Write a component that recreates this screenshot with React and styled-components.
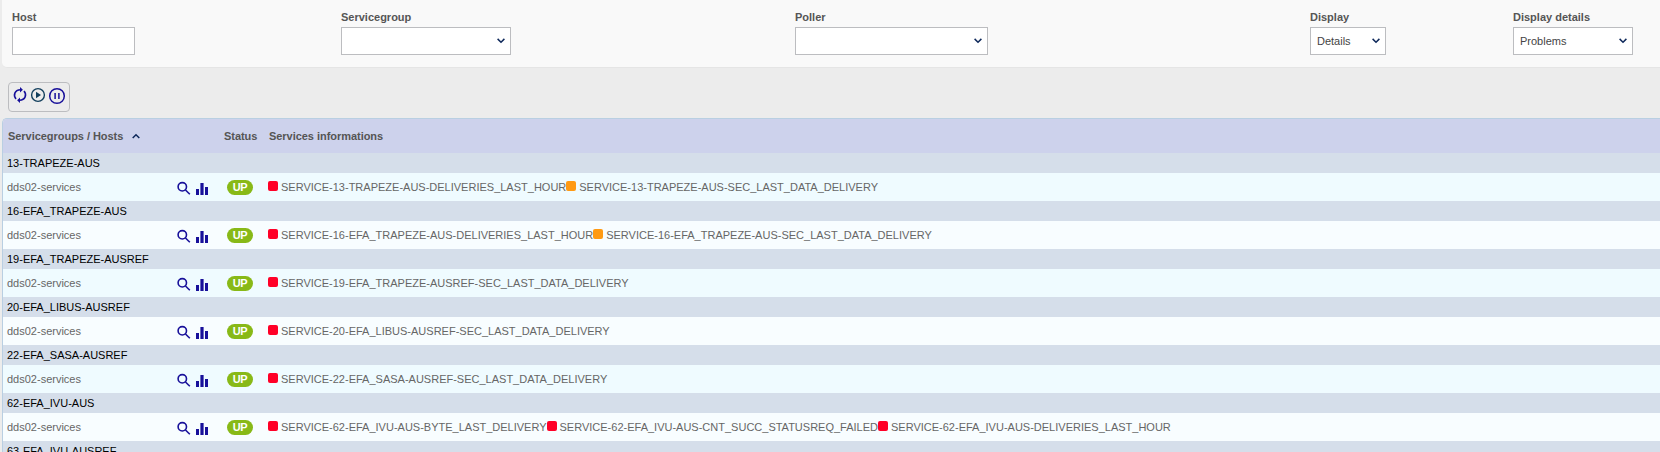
import React from "react";
import styled, { createGlobalStyle } from "styled-components";

const GlobalStyle = createGlobalStyle`
  * { box-sizing: border-box; }
  body {
    margin: 0;
    background: #ececec;
    color: #555;
    font: 11px/14px "Liberation Sans", Arial, sans-serif;
    overflow: hidden;
  }
`;

const Page = styled.main`
  height: 452px;
  padding-left: 2px;
  overflow: hidden;
`;

const Filters = styled.form`
  display: grid;
  grid-template-columns: 329px 454px 515px 203px 1fr;
  height: 68px;
  padding: 10px 0 0 10px;
  background: #f9f9f9;
  border-bottom: 1px solid #e5e5e5;
  border-bottom-left-radius: 5px;
`;

const Field = styled.div`
  display: flex;
  flex-direction: column;
  gap: 3px;
`;

const Label = styled.label`
  height: 14px;
  font-weight: bold;
`;

const Control = styled.div`
  display: flex;
  align-items: center;
  justify-content: space-between;
  width: ${(p) => p.$width}px;
  height: 28px;
  padding: 0 5px 0 6px;
  background: #fff;
  border: 1px solid #bcbdc0;
  color: #444;
`;

const Toolbar = styled.div`
  display: flex;
  align-items: flex-start;
  gap: 3px;
  width: 62px;
  height: 30px;
  margin: 14px 0 6px 6px;
  padding: 3px 0 0 4px;
  border: 1px solid #bcbdc0;
  border-radius: 4px;
`;

const Table = styled.section`
  border-top: 1px solid #b9cfe2;
  border-left: 1px solid #b9cfe2;
  border-top-left-radius: 5px;
  overflow: hidden;
`;

const HeaderRow = styled.header`
  display: grid;
  grid-template-columns: 216px 45px 1fr;
  align-items: center;
  height: 34px;
  padding: 0 0 1px 5px;
  background: #cdd2ec;
  font-weight: bold;
`;

const HeaderCell = styled.div`
  display: flex;
  align-items: center;
  gap: 9px;
  white-space: nowrap;
  letter-spacing: -0.04px;
`;

const GroupRow = styled.div`
  height: 20px;
  padding: 3px 0 0 4px;
  background: #d5deea;
  color: #000;
  white-space: nowrap;
`;

const HostRow = styled.div`
  display: grid;
  grid-template-columns: 170px 50px 41px 1fr;
  height: 28px;
  padding-left: 4px;
  background: ${(p) => (p.$odd ? "#effbff" : "#f8fdff")};
`;

const HostName = styled.span`
  padding-top: 7px;
  color: #666;
`;

const Actions = styled.span`
  display: flex;
  gap: 5px;
  padding-top: 8px;
`;

const Badge = styled.span`
  width: 26px;
  height: 15px;
  margin-top: 7px;
  border-radius: 8px;
  background: #88b917;
  color: #fff;
  font-weight: bold;
  line-height: 15px;
  letter-spacing: -0.5px;
  text-align: center;
`;

const Services = styled.span`
  display: flex;
  padding-top: 7px;
  color: #666;
  white-space: nowrap;
`;

const Service = styled.span`
  display: flex;
  gap: 3px;
`;

const StatusSquare = styled.i`
  width: 10px;
  height: 10px;
  margin-top: 1px;
  border-radius: 2px;
  background: ${(p) => (p.$warning ? "#ff9a13" : "#ff0027")};
`;

const Icon = styled.svg`
  display: block;
  flex: none;
  overflow: visible;
`;

const Chevron = ({ up }) => (
  <Icon width="8" height="6" viewBox="0 0 8 6" fill="none" stroke="#102a5c" strokeWidth="1.5">
    <path d={up ? "M.7 5 4 1.7 7.3 5" : "M.6.9 4 4.2 7.4.9"} />
  </Icon>
);

const RefreshIcon = () => (
  <Icon width="14" height="18" viewBox="0 0 14 18" fill="none" stroke="#18109a" strokeWidth="1.6">
    <path d="M3 13C0 9.5 1.5 4 7.5 3.8M11 5C14 8.5 12.5 14 6.5 14.2" />
    <path d="M7 1.1v5.4L9.9 3.8ZM7 11.5v5.4L4.1 14.2Z" fill="#18109a" stroke="none" />
  </Icon>
);

const PlayIcon = () => (
  <Icon width="16" height="18" viewBox="0 0 16 18" fill="none" stroke="#123f5c" strokeWidth="1.4">
    <circle cx="8" cy="9" r="6.4" />
    <path d="M6 5.8v6.4L11 9Z" fill="#123f5c" stroke="none" />
  </Icon>
);

const PauseIcon = () => (
  <Icon width="16" height="20" viewBox="0 0 16 20" fill="none" stroke="#18109a" strokeWidth="1.5">
    <circle cx="8" cy="10" r="7.3" />
    <path d="M6.1 7v6M9.9 7v6" />
  </Icon>
);

const SearchIcon = () => (
  <Icon width="14" height="14" viewBox="0 0 14 14" fill="none" stroke="#18109a" strokeWidth="1.6">
    <circle cx="5.3" cy="5.8" r="4.2" />
    <path d="m8.5 9 4.3 4.3" />
  </Icon>
);

const ChartIcon = () => (
  <Icon width="13" height="14" viewBox="0 0 13 14" fill="#18109a">
    <path d="M0 8h3v6H0ZM4.4 2h3.2v12H4.4ZM9 6h3v8H9Z" />
  </Icon>
);

const filters = [
  { label: "Host", width: 123 },
  { label: "Servicegroup", width: 170, select: true },
  { label: "Poller", width: 193, select: true },
  { label: "Display", width: 76, select: true, value: "Details" },
  { label: "Display details", width: 120, select: true, value: "Problems" },
];

const groups = [
  { name: "13-TRAPEZE-AUS", services: [["SERVICE-13-TRAPEZE-AUS-DELIVERIES_LAST_HOUR"], ["SERVICE-13-TRAPEZE-AUS-SEC_LAST_DATA_DELIVERY", true]] },
  { name: "16-EFA_TRAPEZE-AUS", services: [["SERVICE-16-EFA_TRAPEZE-AUS-DELIVERIES_LAST_HOUR"], ["SERVICE-16-EFA_TRAPEZE-AUS-SEC_LAST_DATA_DELIVERY", true]] },
  { name: "19-EFA_TRAPEZE-AUSREF", services: [["SERVICE-19-EFA_TRAPEZE-AUSREF-SEC_LAST_DATA_DELIVERY"]] },
  { name: "20-EFA_LIBUS-AUSREF", services: [["SERVICE-20-EFA_LIBUS-AUSREF-SEC_LAST_DATA_DELIVERY"]] },
  { name: "22-EFA_SASA-AUSREF", services: [["SERVICE-22-EFA_SASA-AUSREF-SEC_LAST_DATA_DELIVERY"]] },
  { name: "62-EFA_IVU-AUS", services: [["SERVICE-62-EFA_IVU-AUS-BYTE_LAST_DELIVERY"], ["SERVICE-62-EFA_IVU-AUS-CNT_SUCC_STATUSREQ_FAILED"], ["SERVICE-62-EFA_IVU-AUS-DELIVERIES_LAST_HOUR"]] },
  { name: "63-EFA_IVU-AUSREF" },
];

export default function App() {
  return (
    <Page>
      <GlobalStyle />
      <Filters>
        {filters.map((f) => (
          <Field key={f.label}>
            <Label>{f.label}</Label>
            <Control $width={f.width}>
              <span>{f.value}</span>
              {f.select && <Chevron />}
            </Control>
          </Field>
        ))}
      </Filters>
      <Toolbar>
        <RefreshIcon />
        <PlayIcon />
        <PauseIcon />
      </Toolbar>
      <Table>
        <HeaderRow>
          <HeaderCell>Servicegroups / Hosts <Chevron up /></HeaderCell>
          <HeaderCell>Status</HeaderCell>
          <HeaderCell>Services informations</HeaderCell>
        </HeaderRow>
        {groups.map((g, i) => (
          <React.Fragment key={g.name}>
            <GroupRow>{g.name}</GroupRow>
            {g.services && (
              <HostRow $odd={i % 2 === 0}>
                <HostName>dds02-services</HostName>
                <Actions><SearchIcon /><ChartIcon /></Actions>
                <Badge>UP</Badge>
                <Services>
                  {g.services.map(([name, warning]) => (
                    <Service key={name}>
                      <StatusSquare $warning={warning} />
                      <span>{name}</span>
                    </Service>
                  ))}
                </Services>
              </HostRow>
            )}
          </React.Fragment>
        ))}
      </Table>
    </Page>
  );
}
